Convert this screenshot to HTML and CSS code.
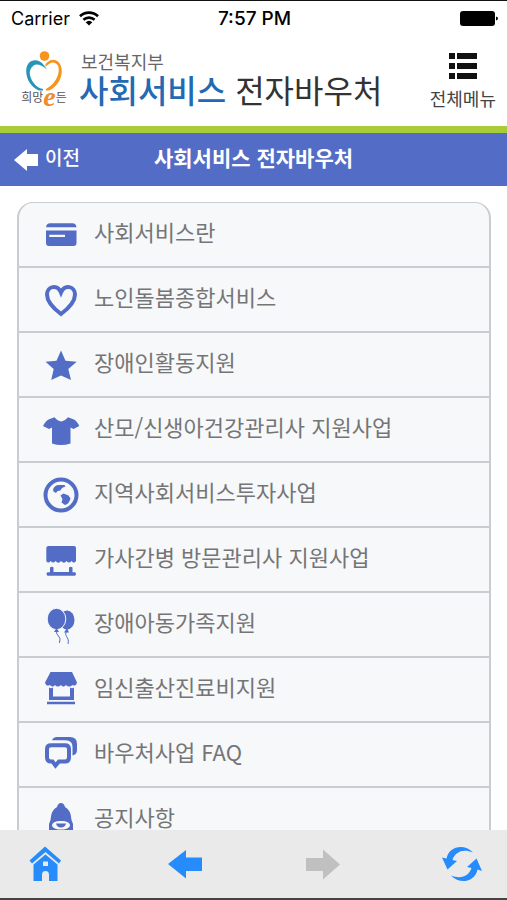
FILE: index.html
```html
<!DOCTYPE html>
<html lang="ko">
<head>
<meta charset="utf-8">
<meta name="viewport" content="width=device-width, initial-scale=1">
<title>사회서비스 전자바우처</title>
<link rel="stylesheet" href="styles.css">
</head>
<body>
<div class="status">
  <div class="status-left">
    <span class="carrier">Carrier</span>
    <svg width="20" height="15" viewBox="0 0 20 15" aria-hidden="true"><g fill="none" stroke="#000" stroke-width="2.6"><path d="M1 5.2A13 13 0 0 1 19 5.2"/><path d="M4.4 8.8A8.2 8.2 0 0 1 15.6 8.8"/></g><path d="M6.7 11.2A4.8 4.8 0 0 1 13.3 11.2L10 14.6Z"/></svg>
  </div>
  <span class="clock">7:57 PM</span>
  <svg class="battery" width="38" height="16" viewBox="0 0 38 16" aria-hidden="true"><rect width="35" height="15" rx="3"/><path d="M36 5.500Q38 6 38 7.500T36 9.500Z"/></svg>
</div>
<header class="header">
  <a class="brand" href="#">
    <span class="logo">
      <svg width="38" height="40" viewBox="0 0 38 40" aria-hidden="true">
        <circle cx="19.500" cy="5" r="4.800" fill="#f7941e"/>
        <path d="M22 18.500Q15 6.500 6.500 10C-2.500 14 0 34 14 39.500H18V38Q12 37 8 31Q1.500 21 8 15Q13 11 22 18.500Z" fill="#2795b5"/>
        <path d="M20.500 13Q27 6 33 10.500C40.500 17 36.500 34 24 39.500H21V38Q30 33 33 24Q35.500 14 30 12Q26 10 20.500 16Z" fill="#f7941e"/>
      </svg>
      <span class="logo-text">희망<em>e</em>든</span>
    </span>
    <span class="names">
      <span class="ministry">보건복지부</span>
      <span class="service"><b>사회서비스</b> 전자바우처</span>
    </span>
  </a>
  <button class="menu" type="button">
    <svg width="28" height="26" viewBox="0 0 28 26" aria-hidden="true"><path d="M0 0h6v6H0zM8 0h20v6H8zM0 10h6v6H0zM8 10h20v6H8zM0 20h6v6H0zM8 20h20v6H8z" fill="#111"/></svg>
    <span>전체메뉴</span>
  </button>
</header>
<nav class="bar">
  <a class="back" href="#">
    <svg width="25" height="22" viewBox="0 0 25 22" aria-hidden="true"><path d="M0 11 13 0V5H24V17H13V22Z" fill="#fff"/></svg>
    <span>이전</span>
  </a>
  <h1>사회서비스 전자바우처</h1>
</nav>
<main class="content">
  <ul class="list">
    <li><a href="#"><svg viewBox="0 0 36 36" aria-hidden="true"><path d="M3 10.200Q3.500 6.200 7 6.200H29.500Q33 6.200 33.500 10.200Z"/><path fill-rule="evenodd" d="M3 13.400H33.500V26Q33.500 29 30.500 29H6Q3 29 3 26ZM6.300 17.700V20H22V17.700Z"/></svg><span>사회서비스란</span></a></li>
    <li><a href="#"><svg viewBox="0 0 36 36" aria-hidden="true"><path class="line" d="M18 32Q4 21.500 4 12.500C4 4 14.500 2 18 10.500C21.500 2 32 4 32 12.500Q32 21.500 18 32Z"/></svg><span>노인돌봄종합서비스</span></a></li>
    <li><a href="#"><svg viewBox="0 0 36 36" aria-hidden="true"><path d="M18 3.500 22.500 13.800 33.700 14.700 25.300 22 28 33 18 28.500 8.200 33 10.700 22 2.500 14.700 13.500 13.800Z"/></svg><span>장애인활동지원</span></a></li>
    <li><a href="#"><svg viewBox="0 0 36 36" aria-hidden="true"><path d="M11.500 5.300Q18 13.500 25 5.300L31 7.500Q34 9 36.300 14L30.500 17 27.500 15.500V31.500Q18 34.500 9 31.500V15.500L6 17 0 14Q2.500 9 5.500 7.500Z"/></svg><span>산모/신생아건강관리사 지원사업</span></a></li>
    <li><a href="#"><svg viewBox="0 0 36 36" aria-hidden="true"><circle class="line" cx="18" cy="18" r="15.500"/><path d="M10 12.500Q11.500 8 16 8L21.500 8 22.500 9.500Q18 11 17.500 13.500L14.500 14 13 16 10.500 14.500ZM17.500 18.500 20.500 16.500 25.500 18.500 27.500 21.500Q26 27 22 28L18.500 25.500 19.500 22Z"/></svg><span>지역사회서비스투자사업</span></a></li>
    <li><a href="#"><svg viewBox="0 0 36 36" aria-hidden="true"><path d="M5.500 4H31Q33 4 33 6V19Q31 22 28.500 19Q26 22 23.500 19Q21 22.500 18 19Q15.500 22.500 12.500 19Q10 22 7.800 19Q5 22 3.300 19V6Q3.300 4 5.500 4ZM7 25.500Q9 24 10.500 25.500V30H26V25.500Q27.500 24 29.500 25.500V30.300H32Q34 32 32 33.700H4.500Q2.500 32 4.500 30.300H7Z"/></svg><span>가사간병 방문관리사 지원사업</span></a></li>
    <li><a href="#"><svg viewBox="0 0 36 36" aria-hidden="true"><ellipse cx="24" cy="13" rx="7.500" ry="9.500"/><path d="M24 21 21 25.500H26Z"/><path class="hair" d="M24 24C20 29 27 30 25 37"/><ellipse class="cut" cx="13.500" cy="12" rx="9.300" ry="10.700"/><path d="M13.500 21 11 25H16Z"/><path class="hair" d="M13.500 24Q13 27 15.500 29T16.500 36"/></svg><span>장애아동가족지원</span></a></li>
    <li><a href="#"><svg viewBox="0 0 36 36" aria-hidden="true"><path d="M7.500 0H29L30.500 3 34 10.500Q33 15 29.500 13Q26 16 23 13Q20 16 18 13Q14.500 16 12 13Q9.500 16 7 13Q3 15 2 10.500L6 3Z"/><path fill-rule="evenodd" d="M6 15.500Q8 17 10 15.500V24.500H27V15.500Q29 17 31 15.500V28H6ZM4 29.800H32V32.300H4Z"/></svg><span>임신출산진료비지원</span></a></li>
    <li><a href="#"><svg viewBox="0 0 36 36" aria-hidden="true"><path class="line" d="M8 8.300H22Q26 8.300 26 12V20.500Q26 24.500 22 24.500H16L12.500 28.500 9.500 24.500H8Q4 24.500 4 20.500V12Q4 8.300 8 8.300Z"/><path d="M9 3.300Q10.500 0 14 0H27Q34 0 34 7V13Q34 17.500 29.500 18.500V10Q29.500 3.300 22.500 3.300Z"/></svg><span>바우처사업 FAQ</span></a></li>
    <li><a href="#"><svg viewBox="0 0 36 36" aria-hidden="true"><path fill-rule="evenodd" d="M18 1Q21 1 22 5Q28 8 28.500 18L30 22V29Q18 32 6 29V22L7.500 18Q8 8 14 5Q15 1 18 1ZM18 19C6 19 6 27.500 18 27.500S30 19 18 19Z"/><path d="M13 21.500H23Q22 25.500 18 25.500T13 21.500Z"/></svg><span>공지사항</span></a></li>
  </ul>
</main>
<footer class="toolbar">
  <button type="button" aria-label="홈"><svg viewBox="0 0 40 40" aria-hidden="true"><path d="M20 2.500 36 16.500 34 19.500 20.500 8 7 19.500 4.500 16.500Z"/><path fill-rule="evenodd" d="M20.500 10.500 32.500 20.500V37H24V31Q24 27 20.500 27T17 31V37H8.500V20.500ZM18 17.500V22H23V17.500Z"/></svg></button>
  <button type="button" aria-label="뒤로"><svg viewBox="0 0 40 40" aria-hidden="true"><path d="M4 20 22 6V13.500H38V27H22V34.500Z"/></svg></button>
  <button type="button" aria-label="앞으로" disabled><svg viewBox="0 0 40 40" aria-hidden="true"><path d="M37 20.500 20 5.500V14H3V27H20V35.500Z"/></svg></button>
  <button type="button" aria-label="새로고침"><svg viewBox="0 0 40 40" aria-hidden="true"><path d="M31 8.500C22-1 7 2 4.500 14.500L0 13.500 5.500 25.500 15 17 10.500 16C13 8 21 4.500 31 8.500Z"/><path d="M9 31.500C18 41 33 38 35.500 25.500L40 27 34.500 14.500 25 23 29.500 24C27 32 19 35.500 9 31.500Z"/></svg></button>
</footer>
</body>
</html>
```
FILE: styles.css
```css
* {
  box-sizing: border-box;
}

body {
  margin: 0;
  height: 100vh;
  display: flex;
  flex-direction: column;
  overflow: hidden;
  background: #fff;
  border-top: 1px solid #111;
  border-bottom: 2px solid #444;
  font-family: "Noto Sans CJK KR", sans-serif;
}

a {
  color: inherit;
  text-decoration: none;
}

button {
  padding: 0;
  border: 0;
  background: none;
  font-family: inherit;
}

svg {
  display: block;
  flex: none;
}

.status {
  display: grid;
  grid-template-columns: 1fr auto 1fr;
  align-items: center;
  height: 35px;
  padding: 0 9px 0 11px;
  font-family: Inter, sans-serif;
  font-size: 18px;
  color: #000;
}

.status-left {
  display: flex;
  align-items: center;
  gap: 9px;
}

.clock {
  font-size: 19px;
  font-weight: 500;
}

.battery {
  justify-self: end;
}

.header {
  display: flex;
  justify-content: space-between;
  height: 97px;
  padding: 13px 11px 0 20px;
  border-bottom: 7px solid #a9cb37;
}

.brand {
  display: flex;
  gap: 11px;
}

.logo {
  display: flex;
  flex-direction: column;
  align-items: center;
  width: 48px;
  padding-top: 2px;
}

.logo-text {
  display: flex;
  align-items: center;
  font-size: 12px;
  line-height: 12px;
  color: #555;
}

.logo-text em {
  font-family: "Liberation Serif", serif;
  font-size: 28px;
  font-weight: bold;
  color: #f28a2a;
}

.names {
  display: flex;
  flex-direction: column;
}

.ministry {
  font-size: 18px;
  line-height: 24px;
  padding-left: 2px;
  color: #666;
}

.service {
  font-size: 32px;
  line-height: 32px;
  font-weight: 400;
  color: #333;
  white-space: nowrap;
}

.service b {
  font-weight: 500;
  color: #2369b3;
}

.menu {
  display: flex;
  flex-direction: column;
  align-items: center;
  gap: 7px;
  padding-top: 4px;
  font-size: 18px;
  line-height: 24px;
  color: #444;
}

.bar {
  display: grid;
  grid-template-columns: 1fr auto 1fr;
  align-items: center;
  height: 53px;
  padding: 0 14px;
  background: #536dc6;
  color: #fff;
}

.back {
  display: flex;
  align-items: center;
  gap: 6px;
  font-size: 19px;
  line-height: 24px;
  font-weight: 500;
}

.back span,
.bar h1 {
  padding-bottom: 5px;
}

.bar h1 {
  margin: 0;
  font-size: 21px;
  line-height: 28px;
  font-weight: 700;
}

.content {
  flex: 1;
  min-height: 0;
  overflow: hidden;
  padding: 16px 16px 0 17px;
}

.list {
  margin: 0;
  padding: 0;
  list-style: none;
  border: 2px solid #c8cdd1;
  border-top-width: 1px;
  border-radius: 16px;
  background: #f6f8fa;
}

.list li {
  border-bottom: 2px solid #c8cdd1;
}

.list li:last-child {
  border-bottom: 0;
}

.list a {
  display: flex;
  align-items: center;
  gap: 15px;
  height: 63px;
  padding-left: 24px;
  font-size: 22px;
  line-height: 32px;
  color: #757575;
}

.list span {
  padding-bottom: 8px;
}

.list svg {
  width: 36px;
  height: 36px;
  overflow: visible;
  fill: #536dc6;
}

.list .line,
.list .hair {
  fill: none;
  stroke: #536dc6;
  stroke-width: 4px;
}

.list .hair {
  stroke-width: 1px;
}

.list .cut {
  stroke: #f6f8fa;
  stroke-width: 1px;
}

.toolbar {
  display: flex;
  justify-content: space-between;
  align-items: center;
  height: 68px;
  padding: 0 25px;
  background: #eaeaea;
}

.toolbar svg {
  width: 40px;
  height: 40px;
  fill: #268cfb;
}

.toolbar button:disabled svg {
  fill: #c0c0c0;
}
```
